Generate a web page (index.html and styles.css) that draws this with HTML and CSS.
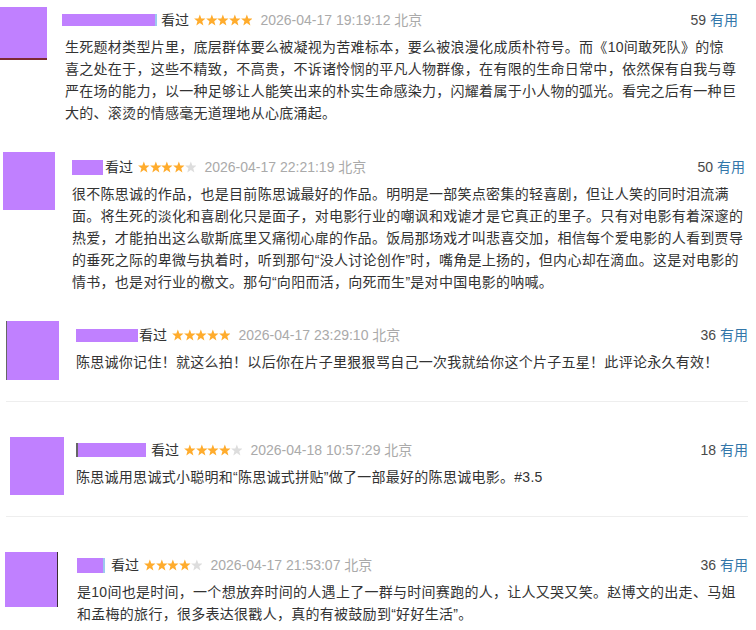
FILE: index.html
```html
<!DOCTYPE html>
<html lang="zh-CN">
<head>
    <meta charset="UTF-8">
    <meta name="viewport" content="width=device-width, initial-scale=1.0">
    <title>短评</title>
    <link rel="stylesheet" href="styles.css">
</head>
<body>
    <svg class="sprites" xmlns="http://www.w3.org/2000/svg">
        <symbol id="star" viewBox="0 0 12 12">
            <polygon points="6,0.3 7.53,4.4 11.9,4.58 8.47,7.3 9.64,11.52 6,9.1 2.36,11.52 3.53,7.3 0.1,4.58 4.47,4.4"/>
        </symbol>
    </svg>

    <div class="comments">
        <div class="review r1">
            <div class="avatar"></div>
            <div class="content">
                <div class="meta">
                    <span class="name-mask"></span>
                    <span class="status">看过</span>
                    <span class="stars">
                        <svg class="on"><use href="#star"/></svg><svg class="on"><use href="#star"/></svg><svg class="on"><use href="#star"/></svg><svg class="on"><use href="#star"/></svg><svg class="on"><use href="#star"/></svg>
                    </span>
                    <span class="time">2026-04-17 19:19:12 北京</span>
                    <span class="votes">59 <a href="#">有用</a></span>
                </div>
                <p class="text">生死题材类型片里，底层群体要么被凝视为苦难标本，要么被浪漫化成质朴符号。而《10间敢死队》的惊喜之处在于，这些不精致，不高贵，不诉诸怜悯的平凡人物群像，在有限的生命日常中，依然保有自我与尊严在场的能力，以一种足够让人能笑出来的朴实生命感染力，闪耀着属于小人物的弧光。看完之后有一种巨大的、滚烫的情感毫无道理地从心底涌起。</p>
            </div>
        </div>

        <div class="review r2">
            <div class="avatar"></div>
            <div class="content">
                <div class="meta">
                    <span class="name-mask"></span>
                    <span class="status">看过</span>
                    <span class="stars">
                        <svg class="on"><use href="#star"/></svg><svg class="on"><use href="#star"/></svg><svg class="on"><use href="#star"/></svg><svg class="on"><use href="#star"/></svg><svg class="off"><use href="#star"/></svg>
                    </span>
                    <span class="time">2026-04-17 22:21:19 北京</span>
                    <span class="votes">50 <a href="#">有用</a></span>
                </div>
                <p class="text">很不陈思诚的作品，也是目前陈思诚最好的作品。明明是一部笑点密集的轻喜剧，但让人笑的同时泪流满面。将生死的淡化和喜剧化只是面子，对电影行业的嘲讽和戏谑才是它真正的里子。只有对电影有着深邃的热爱，才能拍出这么歇斯底里又痛彻心扉的作品。饭局那场戏才叫悲喜交加，相信每个爱电影的人看到贾导的垂死之际的卑微与执着时，听到那句“没人讨论创作”时，嘴角是上扬的，但内心却在滴血。这是对电影的情书，也是对行业的檄文。那句“向阳而活，向死而生”是对中国电影的呐喊。</p>
            </div>
        </div>

        <div class="review r3">
            <div class="avatar"></div>
            <div class="content">
                <div class="meta">
                    <span class="name-mask"></span>
                    <span class="status">看过</span>
                    <span class="stars">
                        <svg class="on"><use href="#star"/></svg><svg class="on"><use href="#star"/></svg><svg class="on"><use href="#star"/></svg><svg class="on"><use href="#star"/></svg><svg class="on"><use href="#star"/></svg>
                    </span>
                    <span class="time">2026-04-17 23:29:10 北京</span>
                    <span class="votes">36 <a href="#">有用</a></span>
                </div>
                <p class="text">陈思诚你记住！就这么拍！以后你在片子里狠狠骂自己一次我就给你这个片子五星！此评论永久有效！</p>
            </div>
        </div>

        <div class="divider"></div>

        <div class="review r4">
            <div class="avatar"></div>
            <div class="content">
                <div class="meta">
                    <span class="name-mask"></span>
                    <span class="status">看过</span>
                    <span class="stars">
                        <svg class="on"><use href="#star"/></svg><svg class="on"><use href="#star"/></svg><svg class="on"><use href="#star"/></svg><svg class="on"><use href="#star"/></svg><svg class="off"><use href="#star"/></svg>
                    </span>
                    <span class="time">2026-04-18 10:57:29 北京</span>
                    <span class="votes">18 <a href="#">有用</a></span>
                </div>
                <p class="text">陈思诚用思诚式小聪明和“陈思诚式拼贴”做了一部最好的陈思诚电影。#3.5</p>
            </div>
        </div>

        <div class="divider"></div>

        <div class="review r5">
            <div class="avatar"></div>
            <div class="content">
                <div class="meta">
                    <span class="name-mask"></span>
                    <span class="status">看过</span>
                    <span class="stars">
                        <svg class="on"><use href="#star"/></svg><svg class="on"><use href="#star"/></svg><svg class="on"><use href="#star"/></svg><svg class="on"><use href="#star"/></svg><svg class="off"><use href="#star"/></svg>
                    </span>
                    <span class="time">2026-04-17 21:53:07 北京</span>
                    <span class="votes">36 <a href="#">有用</a></span>
                </div>
                <p class="text">是10间也是时间，一个想放弃时间的人遇上了一群与时间赛跑的人，让人又哭又笑。赵博文的出走、马姐和孟梅的旅行，很多表达很戳人，真的有被鼓励到“好好生活”。</p>
            </div>
        </div>
    </div>
</body>
</html>
```

FILE: styles.css
```css
body {
    margin: 0;
    padding: 7px 0 0;
    background-color: #fff;
    font-family: "Liberation Sans", "Noto Sans CJK SC", sans-serif;
    font-size: 14px;
    color: #333;
}

.sprites {
    display: none;
}

.review {
    display: flex;
    align-items: flex-start;
}

.review + .review {
    margin-top: 28px;
}

.avatar {
    flex: none;
    background-color: #c080ff;
}

.content {
    flex: 1;
    min-width: 0;
}

.meta {
    display: flex;
    align-items: center;
    height: 20px;
    line-height: 20px;
    margin-top: 3px;
    white-space: nowrap;
}

.name-mask {
    display: inline-block;
    background-color: #c080ff;
}

.status {
    color: #333;
}

.stars {
    display: flex;
    margin: 0 8px 0 5px;
}

.stars svg {
    width: 11.7px;
    height: 12px;
}

.stars .on {
    fill: #ffac2d;
}

.stars .off {
    fill: #ddd;
}

.time {
    color: #aaa;
}

.votes {
    margin-left: auto;
    color: #494949;
}

.votes a {
    color: #37a;
    text-decoration: none;
}

.text {
    margin: 6px 0 0;
    line-height: 22px;
    letter-spacing: 0.28px;
    color: #333;
}

.divider {
    height: 1px;
    margin: 21px 8px 35px 6px;
    background-color: #eee;
}

/* each row sits a little differently in the capture */
.r1 {
    padding-right: 19px;
}

.r1 .avatar {
    width: 47px;
    height: 51px;
    margin-right: 18px;
    border-bottom: 2px solid #7d2a33;
}

.r1 .name-mask {
    width: 93px;
    height: 12px;
    margin-left: -3px;
    margin-right: 4px;
    border-right: 2px solid #9cc9ee;
}

.r1 .votes {
    margin-right: -1px;
}

.r2 {
    padding: 0 11px 0 3px;
}

.r2 .meta {
    margin-top: 5px;
}

.r2 .avatar {
    width: 52px;
    height: 58px;
    margin-right: 17px;
}

.r2 .name-mask {
    width: 31px;
    height: 15px;
    margin-right: 2px;
}

.r3 {
    padding: 0 8px 0 6px;
}

.r3 .meta {
    margin-top: 4px;
}

.r3 .avatar {
    width: 52px;
    height: 59px;
    margin-right: 17px;
    border-left: 1px solid #666;
}

.r3 .name-mask {
    width: 62px;
    height: 13px;
    margin-right: 1px;
}

.r4 {
    padding: 0 8px 0 10px;
}

.r4 .avatar {
    width: 54px;
    height: 58px;
    margin-right: 12px;
}

.r4 .name-mask {
    width: 68px;
    height: 14px;
    margin-right: 5px;
    border-left: 2px solid #666;
}

.r5 {
    padding: 0 8px 0 5px;
}

.r5 .avatar {
    width: 52px;
    height: 55px;
    margin-right: 19px;
    border-right: 1px solid #3a2a33;
}

.r5 .name-mask {
    width: 26px;
    height: 15px;
    margin-right: 6px;
    border-right: 2px solid #9cc9ee;
}
```
